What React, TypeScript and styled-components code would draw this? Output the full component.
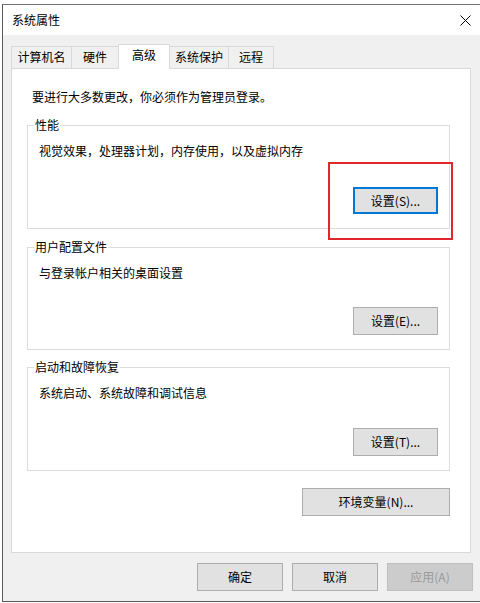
import React from "react";
import styled, { createGlobalStyle } from "styled-components";

const Global = createGlobalStyle`
  html, body { margin: 0; padding: 0; background: #fbfbfb; }
  body { font-family: "Noto Sans CJK SC", "Noto Sans", sans-serif; font-size: 12px; color: #000; }
  * { box-sizing: border-box; }
`;

const Screen = styled.div`
  width: 480px;
  height: 603px;
  padding: 4px 0 0 2px;
  background: #ffffff;
  overflow: hidden;
`;

const Window = styled.div`
  width: 478px;
  height: 598px;
  border-top: 1px solid #727272;
  border-left: 1px solid #5a5a5a;
  border-bottom: 1px solid #5a5a5a;
  display: flex;
  flex-direction: column;
`;

const TitleBar = styled.div`
  height: 30px;
  background: #ffffff;
  display: flex;
  align-items: center;
  justify-content: space-between;
  padding: 0 9px 0 9px;
  font-size: 12px;
  line-height: 16px;
`;

const Body = styled.div`
  flex: 1;
  background: #f0f0f0;
  padding: 9px 7px 0 8px;
  display: flex;
  flex-direction: column;
`;

const TabStrip = styled.div`
  display: flex;
  align-items: flex-end;
  height: 24px;
`;

const Tab = styled.div<{ $w: number; $active?: boolean }>`
  width: ${(p) => p.$w}px;
  height: ${(p) => (p.$active ? 25 : 22)}px;
  margin-bottom: ${(p) => (p.$active ? -1 : 0)}px;
  margin-left: -1px;
  &:first-child { margin-left: 0; }
  background: ${(p) => (p.$active ? "#ffffff" : "#f0f0f0")};
  border: 1px solid #d9d9d9;
  border-bottom: none;
  position: relative;
  z-index: ${(p) => (p.$active ? 2 : 1)};
  display: flex;
  justify-content: center;
  padding-top: 2px;
  font-size: 12px;
  line-height: 16px;
`;

const Panel = styled.div`
  width: 460px;
  height: 485px;
  background: #ffffff;
  border: 1px solid #d9d9d9;
  padding: 20px 20px 0 15px;
  display: flex;
  flex-direction: column;
`;

const Intro = styled.div`
  padding-left: 5px;
  line-height: 16px;
`;

const Group = styled.div<{ $h: number; $mt: number }>`
  position: relative;
  margin-top: ${(p) => p.$mt}px;
  height: ${(p) => p.$h}px;
  border: 1px solid #dcdcdc;
  padding: 17px 11px 14px 11px;
  display: flex;
  flex-direction: column;
  justify-content: space-between;
`;

const Legend = styled.span`
  position: absolute;
  top: -9px;
  left: 6px;
  padding: 0 1px;
  background: #ffffff;
  line-height: 16px;
`;

const Desc = styled.div`
  line-height: 16px;
`;

const Button = styled.button<{ $w: number; $h: number; $focused?: boolean }>`
  width: ${(p) => p.$w}px;
  height: ${(p) => p.$h}px;
  align-self: flex-end;
  background: #e1e1e1;
  border: ${(p) => (p.$focused ? "2px solid #0078d7" : "1px solid #adadad")};
  font-family: "Noto Sans CJK SC", "Noto Sans", sans-serif;
  font-size: 12px;
  color: #000;
  padding: 0;
  line-height: 16px;
  &:disabled {
    background: #cccccc;
    border-color: #bfbfbf;
    color: #9a9a9a;
  }
`;

const Highlight = styled.div`
  position: absolute;
  left: 300px;
  top: 36px;
  width: 125px;
  height: 78px;
  border: 2px solid #e3262c;
  pointer-events: none;
`;

const EnvRow = styled.div`
  margin-top: 17px;
  display: flex;
  justify-content: flex-end;
`;

const Footer = styled.div`
  margin-top: 10px;
  display: flex;
  justify-content: flex-end;
  gap: 9px;
`;

const CloseIcon = () => (
  <svg width="11" height="11" viewBox="0 0 11 11">
    <path d="M0.5 0.5 L10.5 10.5 M10.5 0.5 L0.5 10.5" stroke="#000" strokeWidth="1" fill="none" />
  </svg>
);

export default function App() {
  return (
    <>
      <Global />
      <Screen>
        <Window>
          <TitleBar>
            <span>系统属性</span>
            <CloseIcon />
          </TitleBar>
          <Body>
            <TabStrip>
              <Tab $w={61}>计算机名</Tab>
              <Tab $w={48}>硬件</Tab>
              <Tab $w={52} $active>高级</Tab>
              <Tab $w={60}>系统保护</Tab>
              <Tab $w={46}>远程</Tab>
            </TabStrip>
            <Panel>
              <Intro>要进行大多数更改，你必须作为管理员登录。</Intro>
              <Group $h={104} $mt={20}>
                <Legend>性能</Legend>
                <Desc>视觉效果，处理器计划，内存使用，以及虚拟内存</Desc>
                <Button $w={85} $h={27} $focused>设置(S)...</Button>
                <Highlight />
              </Group>
              <Group $h={103} $mt={18}>
                <Legend>用户配置文件</Legend>
                <Desc>与登录帐户相关的桌面设置</Desc>
                <Button $w={85} $h={28}>设置(E)...</Button>
              </Group>
              <Group $h={104} $mt={17}>
                <Legend>启动和故障恢复</Legend>
                <Desc>系统启动、系统故障和调试信息</Desc>
                <Button $w={85} $h={28}>设置(T)...</Button>
              </Group>
              <EnvRow>
                <Button $w={148} $h={28}>环境变量(N)...</Button>
              </EnvRow>
            </Panel>
            <Footer>
              <Button $w={86} $h={28}>确定</Button>
              <Button $w={86} $h={28}>取消</Button>
              <Button $w={86} $h={28} disabled>应用(A)</Button>
            </Footer>
          </Body>
        </Window>
      </Screen>
    </>
  );
}
